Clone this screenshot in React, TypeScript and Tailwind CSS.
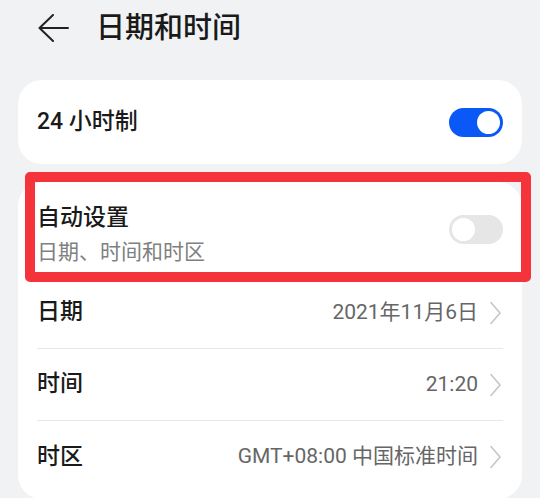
import React, { useState } from "react";

const font = { fontFamily: 'Roboto, "Noto Sans CJK SC", sans-serif' };

function Toggle({ on, onChange }: { on: boolean; onChange: () => void }) {
  return (
    <button
      onClick={onChange}
      className={`w-[54px] h-[29px] rounded-full p-[3px] flex items-center flex-shrink-0 ${
        on ? "bg-[#0a59f7] justify-end" : "bg-[#e6e6e6] justify-start"
      }`}
    >
      <span className="w-[23px] h-[23px] rounded-full bg-white block" />
    </button>
  );
}

function Chevron() {
  return (
    <svg width="14" height="24" viewBox="0 0 14 24" fill="none" className="flex-shrink-0">
      <path d="M2 1.5 L11 12 L2 22.5" stroke="#c6c6c6" strokeWidth="1.6" strokeLinecap="round" strokeLinejoin="round" />
    </svg>
  );
}

function ValueRow({ label, value, last }: { label: string; value: string; last?: boolean }) {
  return (
    <div className={`h-[72px] flex items-center justify-between ${last ? "" : "border-b border-[#e8e8e8]"}`}>
      <span className="text-[23px] font-medium text-[#1a1a1a]">{label}</span>
      <div className="flex items-center gap-[11px]">
        <span className="text-[21px] text-[#666666]">{value}</span>
        <Chevron />
      </div>
    </div>
  );
}

export default function App() {
  const [h24, setH24] = useState(true);
  const [auto, setAuto] = useState(false);

  return (
    <div className="w-[540px] h-[498px] overflow-hidden bg-[#f1f2f4]" style={font}>
      {/* Header */}
      <div className="h-[56px] flex items-center pl-[38px] gap-[27px]">
        <svg width="31" height="28" viewBox="0 0 31 28" fill="none">
          <path d="M15 1 L1.5 14 L15 27 M1.5 14 H30" stroke="#222222" strokeWidth="2" strokeLinecap="round" strokeLinejoin="round" />
        </svg>
        <h1 className="text-[29px] font-medium text-[#1a1a1a] leading-none">日期和时间</h1>
      </div>

      {/* 24-hour card */}
      <div className="mt-[24px] mx-[18px] h-[84px] bg-white rounded-[24px] px-[19px] flex items-center justify-between">
        <span className="text-[23px] font-medium text-[#1a1a1a]">24 小时制</span>
        <Toggle on={h24} onChange={() => setH24(!h24)} />
      </div>

      {/* Date / time card */}
      <div className="relative mt-[18px] mx-[18px] bg-white rounded-[24px] px-[19px] pb-[6px]">
        <div className="h-[95px] flex items-center justify-between border-b border-[#e8e8e8]">
          <div className="flex flex-col gap-[7px] pt-[10px]">
            <span className="text-[23px] font-medium text-[#1a1a1a] leading-[28px]">自动设置</span>
            <span className="text-[21px] text-[#808080] leading-[26px]">日期、时间和时区</span>
          </div>
          <Toggle on={auto} onChange={() => setAuto(!auto)} />
        </div>
        <ValueRow label="日期" value="2021年11月6日" />
        <ValueRow label="时间" value="21:20" />
        <ValueRow label="时区" value="GMT+08:00 中国标准时间" last />

        {/* highlight frame around the auto-set row */}
        <div className="absolute left-[7px] right-[-9px] top-[-10px] h-[110px] border-[10px] border-[#f5333a] rounded-[5px] pointer-events-none" />
      </div>
    </div>
  );
}
